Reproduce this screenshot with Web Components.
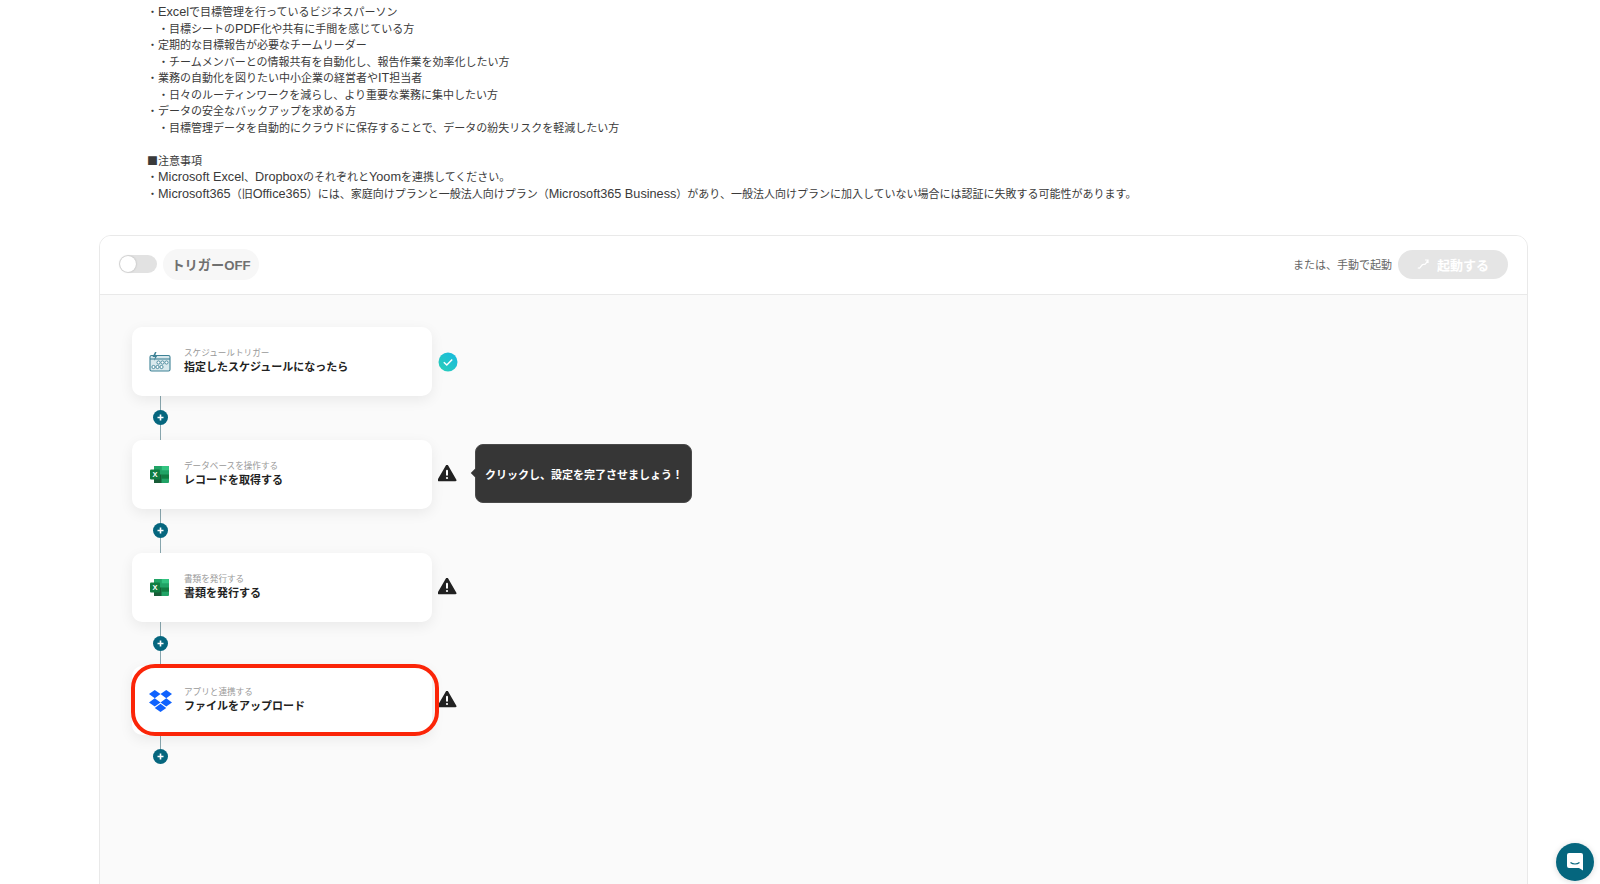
<!DOCTYPE html>
<html lang="ja">
<head>
<meta charset="utf-8">
<title>Yoom flow</title>
<style>
  html, body { margin: 0; height: 884px; overflow: hidden; background: #fff; }
  body { font-family: "Liberation Sans", "Noto Sans CJK JP", sans-serif; color: #333; }
</style>
</head>
<body>
<flow-page>
  <text-note><span>・</span><span class="en">Excel</span><span>で目標管理を行っているビジネスパーソン</span>
<span>　・目標シートの</span><span class="en">PDF</span><span>化や共有に手間を感じている方</span>
<span>・定期的な目標報告が必要なチームリーダー</span>
<span>　・チームメンバーとの情報共有を自動化し、報告作業を効率化したい方</span>
<span>・業務の自動化を図りたい中小企業の経営者や</span><span class="en">IT</span><span>担当者</span>
<span>　・日々のルーティンワークを減らし、より重要な業務に集中したい方</span>
<span>・データの安全なバックアップを求める方</span>
<span>　・目標管理データを自動的にクラウドに保存することで、データの紛失リスクを軽減したい方</span>

<span class="ja">■注意事項</span>
<span>・</span><span class="en">Microsoft Excel</span><span>、</span><span class="en">Dropbox</span><span>のそれぞれと</span><span class="en">Yoom</span><span>を連携してください。</span>
<span>・</span><span class="en">Microsoft365</span><span>（旧</span><span class="en">Office365</span><span>）には、家庭向けプランと一般法人向けプラン（</span><span class="en">Microsoft365 Business</span><span>）があり、一般法人向けプランに加入していない場合には認証に失敗する可能性があります。</span></text-note>
  <flow-panel>
    <flow-step icon="schedule" label="スケジュールトリガー" title="指定したスケジュールになったら" status="ok"></flow-step>
    <flow-step icon="excel" label="データベースを操作する" title="レコードを取得する" status="warn" tip="クリックし、設定を完了させましょう！"></flow-step>
    <flow-step icon="excel" label="書類を発行する" title="書類を発行する" status="warn"></flow-step>
    <flow-step icon="dropbox" label="アプリと連携する" title="ファイルをアップロード" status="warn" marked last></flow-step>
  </flow-panel>
  <chat-button></chat-button>
</flow-page>

<script>
// アイコン
const ICONS = {
  schedule: `<svg width="22" height="22" viewBox="0 0 22 22" fill="none" stroke="#3f8296" stroke-width="1.1">
      <rect x="1" y="4.5" width="20" height="15.5" rx="1.5" fill="#d9e9ed"/>
      <path d="M1 8h20" />
      <path d="M6 1 3.5 6H6l-1 4 3.5-5.5H6.2L7.5 1z" fill="#3f8296" stroke="none"/>
      <g stroke-width=".9" fill="#fff">
        <circle cx="9.5" cy="11.5" r="1.6"/><circle cx="13.5" cy="11.5" r="1.6"/><circle cx="17.5" cy="11.5" r="1.6"/>
        <circle cx="4.5" cy="16" r="1.6"/><circle cx="8.5" cy="16" r="1.6"/><circle cx="12.5" cy="16" r="1.6"/>
      </g>
    </svg>`,
  excel: `<svg width="20" height="19" viewBox="0 0 20 19">
      <rect x="4" y="1" width="15" height="17" rx="1" fill="#21a366"/>
      <rect x="11.5" y="1" width="7.5" height="4.3" fill="#33c481"/>
      <rect x="4" y="9.5" width="7.5" height="8.5" fill="#185c37"/>
      <rect x="11.5" y="9.5" width="7.5" height="4.2" fill="#107c41"/>
      <rect x="4" y="1" width="7.5" height="4.3" fill="#21a366"/>
      <rect x="0" y="4.5" width="10" height="10" rx="1" fill="#107c41"/>
      <text x="5" y="12" font-size="7.5" font-weight="700" fill="#fff" text-anchor="middle" font-family="Liberation Sans, sans-serif">X</text>
    </svg>`,
  dropbox: `<svg width="23" height="26" viewBox="0 0 24 24" preserveAspectRatio="none" fill="#0f62fe">
      <path d="M6 1.807L0 5.629l6 3.822 6.001-3.822L6 1.807zM18 1.807l-6 3.822 6 3.822 6-3.822-6-3.822zM0 13.274l6 3.822 6.001-3.822L6 9.452l-6 3.822zM18 9.452l-6 3.822 6 3.822 6-3.822-6-3.822zM6 18.371l6.001 3.822 6-3.822-6-3.822L6 18.371z"/>
    </svg>`
};

class FlowPage extends HTMLElement {
  constructor() {
    super();
    this.attachShadow({ mode: 'open' });
    this.shadowRoot.innerHTML = `
      <style>
        :host { display: flex; flex-direction: column; height: 884px; overflow: hidden; }
      </style>
      <slot></slot>
    `;
  }
}

class TextNote extends HTMLElement {
  constructor() {
    super();
    this.attachShadow({ mode: 'open' });
    this.shadowRoot.innerHTML = `
      <style>
        :host {
          display: block;
          flex: none;
          padding: 4px 0 0 147px;
          height: 235px;
          box-sizing: border-box;
          font-size: 11px;
          line-height: 16.5px;
          color: #3a3a3a;
        }
        .text { white-space: pre-line; }
        ::slotted(.en) { font-size: 12.7px; line-height: 1; }
        ::slotted(.ja) { font-family: "Noto Sans CJK JP", sans-serif; line-height: 1; }
      </style>
      <div class="text"><slot></slot></div>
    `;
  }
}

class FlowPanel extends HTMLElement {
  constructor() {
    super();
    this.attachShadow({ mode: 'open' });
    this.shadowRoot.innerHTML = `
      <style>
        :host {
          display: block;
          flex: none;
          width: 1429px;
          height: 720px;
          margin-left: 99px;
          box-sizing: border-box;
          border: 1px solid #e9e9e9;
          border-radius: 12px;
          overflow: hidden;
          background: #fafafa;
        }
        header {
          display: flex;
          align-items: center;
          height: 59px;
          box-sizing: border-box;
          padding: 0 19px 2px;
          background: #fff;
          border-bottom: 1px solid #e9e9e9;
        }
        .toggle {
          width: 38px;
          height: 18px;
          border-radius: 9px;
          background: #e2e2e2;
          display: flex;
          align-items: center;
          margin-right: 6px;
        }
        .toggle i {
          width: 16px;
          height: 16px;
          margin-left: 1px;
          border-radius: 50%;
          background: #fff;
          box-shadow: 0 0 2px rgba(0, 0, 0, 0.25);
        }
        .state {
          height: 31px;
          width: 96px;
          display: flex;
          align-items: center;
          justify-content: center;
          border-radius: 16px;
          background: #f7f7f7;
          color: #707070;
          font-size: 13.2px;
          font-weight: 700;
        }
        .manual {
          margin-left: auto;
          font-size: 11px;
          color: #666;
          margin-right: 6px;
        }
        .run {
          width: 110px;
          height: 29px;
          display: flex;
          align-items: center;
          justify-content: center;
          gap: 8px;
          border-radius: 15px;
          background: #e5e5e5;
          color: #fff;
          font-size: 13px;
          font-weight: 700;
        }
        main {
          display: flex;
          flex-direction: column;
          padding: 32px 0 0 32px;
        }
      </style>
      <header>
        <span class="toggle"><i></i></span>
        <span class="state">トリガーOFF</span>
        <span class="manual">または、手動で起動</span>
        <span class="run">
          <svg width="12" height="10" viewBox="0 0 12 10" fill="none" stroke="#fff" stroke-width="1.2">
            <path d="M.8 8.8c1.5 1 2.500-.2 3.200-1.400S5.600 4.800 7 5.400 9.500 3.600 10.800 1.200M8 1h3v3"/>
          </svg>
          起動する
        </span>
      </header>
      <main><slot></slot></main>
    `;
  }
}

class FlowStep extends HTMLElement {
  constructor() {
    super();
    this.attachShadow({ mode: 'open' });
  }

  connectedCallback() {
    const icon = ICONS[this.getAttribute('icon')] || '';
    const status = this.getAttribute('status');
    const tip = this.getAttribute('tip');
    const last = this.hasAttribute('last');
    this.shadowRoot.innerHTML = `
      <style>
        :host { display: block; }
        .row { display: flex; align-items: center; }
        .card {
          position: relative;
          width: 300px;
          height: 69px;
          box-sizing: border-box;
          display: flex;
          align-items: center;
          padding-left: 16px;
          background: #fff;
          border-radius: 10px;
          box-shadow: 0 4px 14px rgba(0, 0, 0, 0.07);
        }
        .icon { width: 24px; display: flex; justify-content: center; margin-right: 12px; }
        .text { padding-bottom: 2px; }
        .label { font-size: 8.6px; line-height: 12px; color: #999; }
        .title { font-size: 11px; line-height: 16px; font-weight: 700; color: #222; }
        .mark {
          position: absolute;
          left: -1px;
          right: -7px;
          top: -2px;
          bottom: -1px;
          border: 4px solid #fb2508;
          border-radius: 24px;
          box-sizing: border-box;
          pointer-events: none;
        }
        .status { margin-left: 6px; width: 20px; height: 20px; display: flex; }
        .tip {
          position: relative;
          margin: 0 0 2px 17px;
          width: 217px;
          height: 59px;
          box-sizing: border-box;
          display: flex;
          align-items: center;
          padding-left: 9px;
          background: #363636;
          border: 1px solid #4a4a4a;
          border-radius: 8px;
          color: #fff;
          font-size: 11px;
          font-weight: 700;
        }
        .tip::before {
          content: '';
          position: absolute;
          left: -4px;
          top: 25px;
          width: 6px;
          height: 6px;
          background: #363636;
          transform: rotate(45deg);
        }
        .link {
          display: flex;
          flex-direction: column;
          align-items: center;
          width: 16px;
          margin-left: 20px;
          height: 44px;
        }
        .line { width: 1px; background: #88a6ae; }
        .line.a { height: 14px; }
        .line.b { flex: 1; }
        .plus {
          flex: none;
          width: 15px;
          height: 15px;
          border-radius: 50%;
          background: #05667e;
          display: flex;
          align-items: center;
          justify-content: center;
        }
      </style>
      <div class="row">
        <div class="card">
          <span class="icon">${icon}</span>
          <div class="text">
            <div class="label">${this.getAttribute('label')}</div>
            <div class="title">${this.getAttribute('title')}</div>
          </div>
          ${this.hasAttribute('marked') ? '<span class="mark"></span>' : ''}
        </div>
        <span class="status">${status === 'ok' ? `
          <svg width="20" height="20" viewBox="0 0 20 20">
            <defs><linearGradient id="g" x1="0" y1="1" x2="1" y2="0"><stop offset="0" stop-color="#2bd0b8"/><stop offset="1" stop-color="#17b8e0"/></linearGradient></defs>
            <circle cx="10" cy="10" r="9.500" fill="url(#g)"/>
            <path d="M5.800 10.200l3 2.800 5.400-5.600" fill="none" stroke="#fff" stroke-width="1.500"/>
          </svg>` : `
          <svg width="20" height="20" viewBox="1 2 20 20">
            <path d="M10 2.500 18.500 17.200H1.500z" fill="#222" stroke="#222" stroke-width="2" stroke-linejoin="round"/>
            <rect x="9" y="6.800" width="2" height="6" rx="1" fill="#fff"/>
            <circle cx="10" cy="15" r="1.100" fill="#fff"/>
          </svg>`}
        </span>
        ${tip ? `<div class="tip">${tip}</div>` : ''}
      </div>
      <div class="link">
        <span class="line a"></span>
        <span class="plus">
          <svg width="7" height="7" viewBox="0 0 7 7"><path d="M3.500 .5v6M.5 3.500h6" stroke="#fff" stroke-width="1.600"/></svg>
        </span>
        ${last ? '' : '<span class="line b"></span>'}
      </div>
    `;
  }
}

class ChatButton extends HTMLElement {
  constructor() {
    super();
    this.attachShadow({ mode: 'open' });
    this.shadowRoot.innerHTML = `
      <style>
        :host {
          position: fixed;
          right: 6px;
          bottom: 3px;
          width: 38px;
          height: 38px;
          border-radius: 50%;
          background: #05667e;
          box-shadow: 0 1px 6px rgba(0, 0, 0, 0.15);
          display: flex;
          align-items: center;
          justify-content: center;
        }
      </style>
      <svg width="18" height="20" viewBox="0 0 18 20">
        <path d="M3 1h12a2 2 0 0 1 2 2v15.500l-4-2.500H3a2 2 0 0 1-2-2V3a2 2 0 0 1 2-2z" fill="#fff"/>
        <path d="M4.500 10.500c2.500 2 6.500 2 9 0" fill="none" stroke="#05667e" stroke-width="1.200"/>
      </svg>
    `;
  }
}

customElements.define('flow-page', FlowPage);
customElements.define('text-note', TextNote);
customElements.define('flow-panel', FlowPanel);
customElements.define('flow-step', FlowStep);
customElements.define('chat-button', ChatButton);
</script>
</body>
</html>
